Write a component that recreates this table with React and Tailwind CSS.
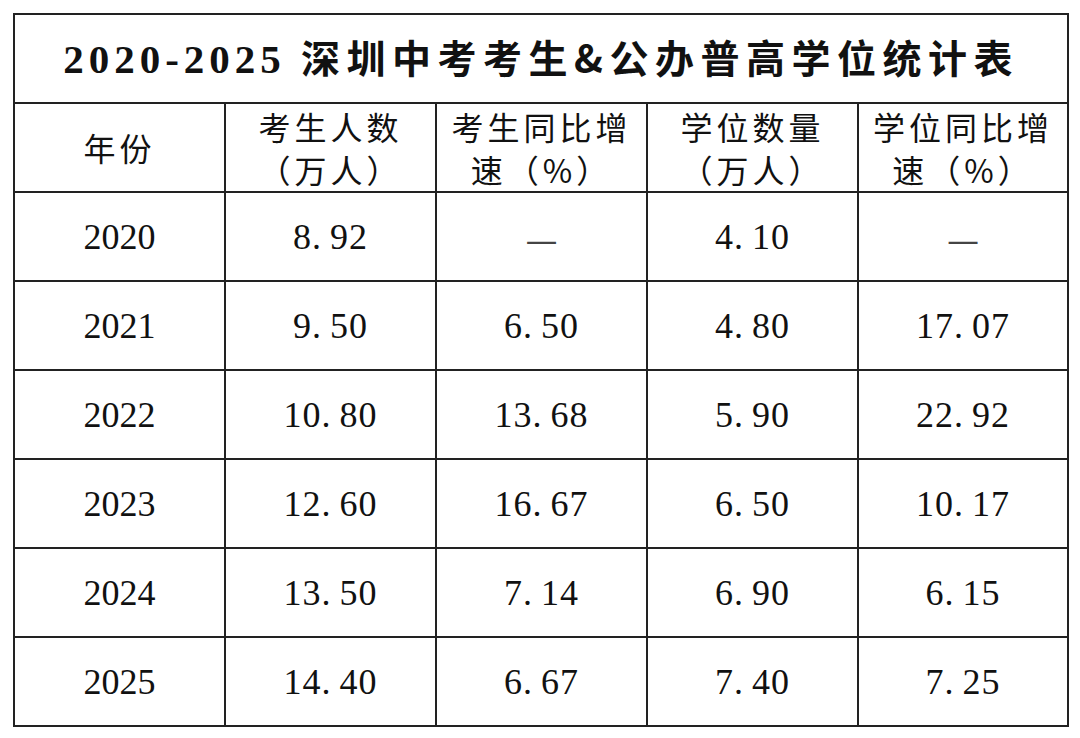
import React from 'react';

const HEAD = [
  ['年份'],
  ['考生人数', '（万人）'],
  ['考生同比增', '速（%）'],
  ['学位数量', '（万人）'],
  ['学位同比增', '速（%）'],
];

const ROWS = [
  ['2020', '8.92', '—', '4.10', '—'],
  ['2021', '9.50', '6.50', '4.80', '17.07'],
  ['2022', '10.80', '13.68', '5.90', '22.92'],
  ['2023', '12.60', '16.67', '6.50', '10.17'],
  ['2024', '13.50', '7.14', '6.90', '6.15'],
  ['2025', '14.40', '6.67', '7.40', '7.25'],
];

const serif = "font-['Liberation_Serif','DejaVu_Serif',serif]";
const cjk = "font-['Noto_Sans_CJK_SC','Noto_Sans',sans-serif]";

// numbers in the picture have a wide gap after the dot
const Num = ({ v }) => {
  if (v === '—') return <span className={`${cjk} text-[#444] text-[36px]`}>—</span>;
  const [a, b] = v.split('.');
  return (
    <span className={`${serif} text-[36px] tracking-[1px]`}>
      {a}.<span className="ml-[8px]">{b}</span>
    </span>
  );
};

const App = () => {
  return (
    <div className="w-[1080px] h-[738px] bg-white pt-[13px] pl-[13px]">
      <table className="border-collapse table-fixed w-[1054px] text-[#111]">
        <colgroup>
          <col className="w-[211px]" />
          <col className="w-[211px]" />
          <col className="w-[211px]" />
          <col className="w-[211px]" />
          <col className="w-[210px]" />
        </colgroup>
        <thead>
          <tr className="h-[89px]">
            <th colSpan={5} className="border-2 border-[#222] text-center">
              <span className={`${serif} text-[41px] font-bold tracking-[5px]`}>2020-2025 </span>
              <span className={`${cjk} text-[39px] font-bold tracking-[6.5px]`}>深圳中考考生&amp;公办普高学位统计表</span>
            </th>
          </tr>
          <tr className="h-[89px]">
            {HEAD.map((h, i) => (
              <th key={i} className={`border-2 border-[#222] text-center font-normal ${cjk} text-[32px] leading-[43px] tracking-[4px]`}>
                {h.map((line, j) => (
                  <div key={j}>{line}</div>
                ))}
              </th>
            ))}
          </tr>
        </thead>
        <tbody>
          {ROWS.map((r) => (
            <tr key={r[0]} className="h-[89px]">
              {r.map((v, i) => (
                <td key={i} className="border-2 border-[#222] text-center align-middle">
                  {i === 0 ? (
                    <span className={`${serif} text-[36px]`}>{v}</span>
                  ) : (
                    <Num v={v} />
                  )}
                </td>
              ))}
            </tr>
          ))}
        </tbody>
      </table>
    </div>
  );
};

export default App;
